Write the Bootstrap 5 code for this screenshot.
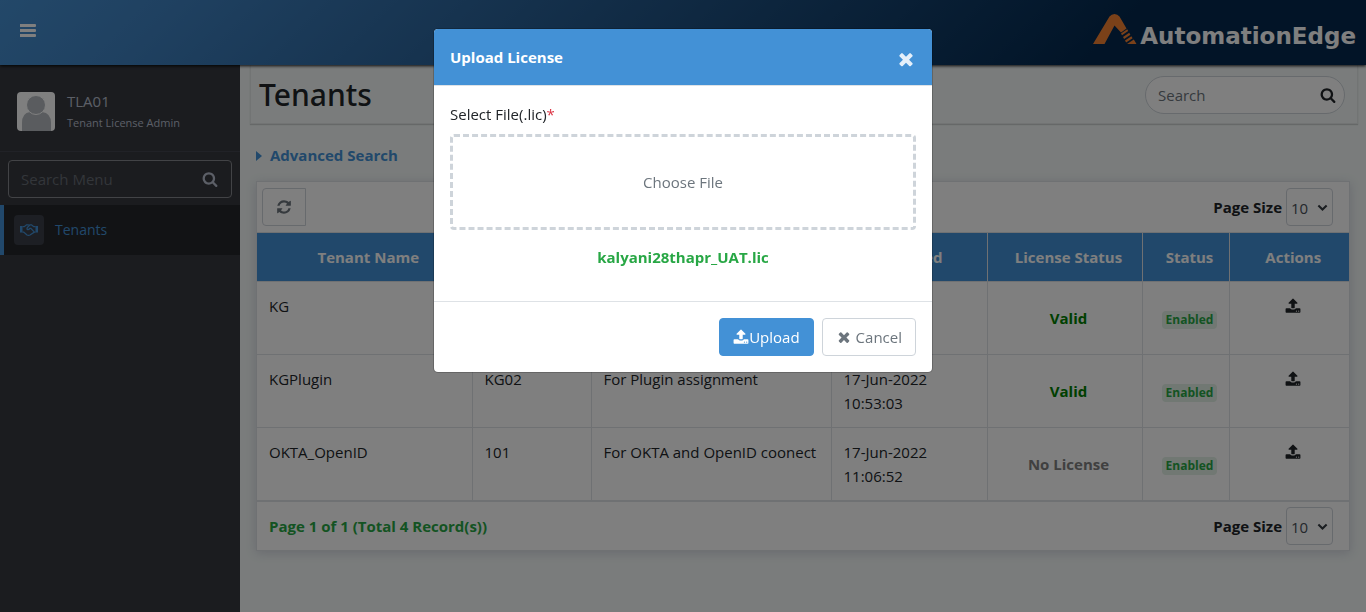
<!DOCTYPE html>
<html lang="en">
<head>
<meta charset="utf-8">
<meta name="viewport" content="width=device-width, initial-scale=1">
<title>Tenants - AutomationEdge</title>
<link href="https://cdn.jsdelivr.net/npm/bootstrap@5.3.0/dist/css/bootstrap.min.css" rel="stylesheet">
<style>
  :root { --ae-blue: #4391d6; --ae-line: #dee2e6; --ae-ink: #212529; }
  body { font-family: "Open Sans", "Noto Sans", sans-serif; font-size: 15px; line-height: 24px; color: var(--ae-ink); background: #f4f9f8; }
  .ico { width: 16px; height: 16px; fill: currentColor; display: inline-block; vertical-align: -2px; flex: none; }
  .form-control, .form-select, .btn { font-size: 15px; line-height: 24px; }

  .topbar { height: 65px; padding: 0 10px 0 16px; background: linear-gradient(135deg, #4690d2 0%, #3f82c2 12%, #04294f 80%, #04294f 100%); box-shadow: 0 1px 3px rgba(0,0,0,.9); z-index: 2; }
  .menu-toggle { color: #fff; }
  .menu-toggle .ico { width: 20px; height: 20px; }
  .brand { color: #fff; font: 700 23px/28px "DejaVu Sans", sans-serif; padding-bottom: 3px; }
  .brand:hover { color: #fff; }
  .brand-mark { width: 44px; height: 32px; margin: 0 3px 5px 0; }

  .side { width: 240px; background: #36383f; color: #b8bfce; }
  .side-user { height: 87px; padding: 6px 17px 0; border-bottom: 1px solid #42454e; }
  .avatar { width: 38px; height: 39px; border-radius: 4px; }
  .side-user small { font-size: 11px; line-height: 20px; }
  .side-search { background: transparent; border: 1px solid #85878c; border-radius: 4px; margin: 8px 8px 7px; padding-right: 9px; }
  .side-search .form-control { background: transparent; color: #b8bfce; }
  .side-search .form-control::placeholder { color: #666c74; }
  .side-link { height: 50px; background: #24272a; border-left: 4px solid var(--ae-blue); color: var(--ae-blue); font-size: 14px; }
  .side-icon { width: 30px; height: 30px; border-radius: 4px; background: #3a3f48; margin: 0 11px 0 10px; }
  .side-icon svg { width: 18px; height: 14px; }

  .page-head { height: 59px; margin: 0 9px 0 10px; padding: 2px 8px 0; border: 1px solid #e4e8e8; border-top: 0; box-shadow: 0 1px 1px rgba(0,0,0,.16); }
  .page-head h1 { font: 500 30px/40px "Noto Sans", "Open Sans", sans-serif; }
  .find { width: 200px; border: 1px solid #ced4da; border-radius: 19px; background: #fff; height: 38px; }
  .find .form-control::placeholder { color: #6c757d; }
  .content-pad { padding: 0 17px 0 16px; }
  .adv { color: var(--ae-blue); font-weight: 700; margin: 19px 0 14px; }
  .adv .ico { width: 6px; height: 10px; vertical-align: 0; }

  .grid-box { box-shadow: 0 2px 10px rgba(70,70,120,.2); background: #fff; border: 1px solid var(--ae-line); }
  .grid-bar { height: 50px; padding: 0 16px 0 5px; }
  .btn-refresh { width: 44px; height: 38px; border: 1px solid #ced4da; color: #6c757d; border-radius: 4px 0 0 4px; }
  .size-pick { width: 47px; height: 38px; padding: 7px 4px 5px; border: 1px solid #ced4da; border-radius: 4px; color: #495057; background-position: right 4px center; background-size: 11px 11px;
    background-image: url("data:image/svg+xml,%3csvg xmlns='http://www.w3.org/2000/svg' viewBox='0 0 16 16'%3e%3cpath fill='none' stroke='%23343a40' stroke-width='3' d='m2 5 6 6 6-6'/%3e%3c/svg%3e"); }
  .tenants { table-layout: fixed; border-color: var(--ae-line); }
  .tenants th, .tenants td { padding: 12px 4px 12px 12px; }
  .tenants thead th { background: var(--ae-blue); color: #fff; text-align: center; white-space: nowrap; border-top: 0; }
  .tenants tbody td { height: 73px; color: var(--ae-ink); }
  .tenants tr > :first-child { border-left: 0; }
  .tenants tr > :last-child { border-right: 0; }
  .c-name { width: 215px; } .c-org { width: 119px; } .c-desc { width: 240px; } .c-date { width: 156px; }
  .c-lic { width: 155px; } .c-stat { width: 87px; } .c-act { width: 120px; }
  .tenants tbody td.valid { color: #008000; }
  .tenants tbody td.nolic { color: #808080; }
  .chip { background: #e2f1e6; color: #28a745; font-size: 12px; line-height: 18px; font-weight: 700; border-radius: 4px; padding: 0 4px; display: inline-block; }
  .grid-foot { height: 49px; border-top: 1px solid var(--ae-line); }
  .total { color: #28a745; font-weight: 700; }

  .modal-content { border-radius: 5px; border-color: rgba(0,0,0,.2); overflow: hidden; }
  .modal-header { background: var(--ae-blue); color: #fff; border-bottom: 1px solid var(--ae-line); border-radius: 0; height: 57px; }
  .modal-title { font-size: 15px; line-height: 24px; font-weight: 700; }
  .close-x { color: #e4effa; }
  .close-x .ico { width: 20px; height: 20px; }
  .drop-area { height: 96px; border: 3px dashed #ced4da; border-radius: 4px; color: #6c757d; cursor: pointer; }
  .picked { margin: 15px 0 8px; }
  .modal-footer .btn { height: 38px; border-radius: 4px; padding: 6px 13px; }
  .btn-up { --bs-btn-bg: var(--ae-blue); --bs-btn-border-color: var(--ae-blue); --bs-btn-color: #fff; --bs-btn-hover-bg: #2f7fc5; --bs-btn-hover-color: #fff; }
  .btn-cancel { --bs-btn-border-color: #ced4da; --bs-btn-color: #6c757d; --bs-btn-bg: #fff; --bs-btn-hover-bg: #f1f3f5; }
</style>
</head>
<body class="d-flex flex-column min-vh-100">

<svg class="d-none" xmlns="http://www.w3.org/2000/svg">
  <symbol id="i-search" viewBox="0 0 1792 1792"><path d="M1216 832q0-185-131.500-316.500t-316.500-131.500-316.500 131.500-131.500 316.500 131.500 316.500 316.500 131.500 316.500-131.500 131.500-316.500zm512 832q0 52-38 90t-90 38q-54 0-90-38l-343-342q-179 124-399 124-143 0-273.500-55.500t-225-150-150-225-55.500-273.500 55.500-273.500 150-225 225-150 273.500-55.500 273.500 55.500 225 150 150 225 55.500 273.500q0 220-124 399l343 343q37 37 37 90z"/></symbol>
  <symbol id="i-refresh" viewBox="0 0 1792 1792"><path d="M1639 1056q0 5-1 7-64 268-268 434.500t-478 166.500q-146 0-282.500-55t-243.500-157l-129 129q-19 19-45 19t-45-19-19-45v-448q0-26 19-45t45-19h448q26 0 45 19t19 45-19 45l-137 137q71 66 161 102t187 36q134 0 250-65t186-179q11-17 53-117 8-23 30-23h192q13 0 22.500 9.500t9.500 22.500zm25-800v448q0 26-19 45t-45 19h-448q-26 0-45-19t-19-45 19-45l138-138q-148-137-349-137-134 0-250 65t-186 179q-11 17-53 117-8 23-30 23h-199q-13 0-22.500-9.500t-9.500-22.500v-7q65-268 270-434.500t480-166.500q146 0 284 55.500t245 156.500l130-129q19-19 45-19t45 19 19 45z"/></symbol>
  <symbol id="i-upload" viewBox="0 0 1792 1792"><path d="M1344 1472q0-26-19-45t-45-19-45 19-19 45 19 45 45 19 45-19 19-45zm256 0q0-26-19-45t-45-19-45 19-19 45 19 45 45 19 45-19 19-45zm128-224v320q0 40-28 68t-68 28h-1472q-40 0-68-28t-28-68v-320q0-40 28-68t68-28h427q21 56 70.500 92t110.500 36h256q61 0 110.500-36t70.500-92h427q40 0 68 28t28 68zm-325-648q-17 40-59 40h-256v448q0 26-19 45t-45 19h-256q-26 0-45-19t-19-45v-448h-256q-42 0-59-40-17-39 14-69l448-448q18-19 45-19t45 19l448 448q31 30 14 69z"/></symbol>
  <symbol id="i-times" viewBox="0 0 1792 1792"><path d="M1490 1322q0 40-28 68l-136 136q-28 28-68 28t-68-28l-294-294-294 294q-28 28-68 28t-68-28l-136-136q-28-28-28-68t28-68l294-294-294-294q-28-28-28-68t28-68l136-136q28-28 68-28t68 28l294 294 294-294q28-28 68-28t68 28l136 136q28 28 28 68t-28 68l-294 294 294 294q28 28 28 68z"/></symbol>
</svg>

<header class="topbar d-flex align-items-center justify-content-between position-relative">
  <button type="button" class="menu-toggle btn p-0 border-0" aria-label="Toggle menu">
    <svg class="ico ms-1 d-block" viewBox="0 0 20 20"><rect x="-1" y="1" width="17" height="3" rx="1"/><rect x="-1" y="6" width="17" height="3" rx="1"/><rect x="-1" y="11" width="17" height="3" rx="1"/></svg>
  </button>
  <a href="#" class="brand d-flex align-items-end text-decoration-none">
    <svg class="brand-mark" viewBox="0 0 44 32" aria-hidden="true">
      <path fill="#f58233" d="M0 31 16.500 3.500Q18.500 1 21.500 1t5 2.500L33.500 15.500 28 19.500 21.500 12.500 11.500 31Z"/>
      <path fill="#f58233" d="m28 20.500 6.200-4.200 1 1.800-6.200 4.200zM30 24l6.200-4.200 1.200 2-6.300 4.300zM32 27.600l6.400-4.300 1.200 2-6.500 4.300zM34 31l6.800-4.500L43.500 31z"/>
    </svg>
    <span>AutomationEdge</span>
  </a>
</header>

<div class="d-flex flex-grow-1">
  <nav class="side flex-shrink-0" aria-label="Main">
    <div class="side-user d-flex align-items-center">
      <svg class="avatar flex-shrink-0" viewBox="0 0 38 39" aria-hidden="true">
        <rect width="38" height="39" fill="#fff"/>
        <path fill="#b4b9be" d="M5 39V31Q5 21 13 20h12Q34 21 34 31V39Z"/>
        <circle cx="19" cy="13" r="9.500" fill="#b4b9be" stroke="#fff"/>
      </svg>
      <div class="ps-2 ms-1">
        <div>TLA01</div>
        <small class="d-block">Tenant License Admin</small>
      </div>
    </div>
    <div class="side-search d-flex align-items-center">
      <input type="search" class="form-control border-0" placeholder="Search Menu" aria-label="Search Menu">
      <svg class="ico me-1"><use href="#i-search"/></svg>
    </div>
    <a href="#" class="side-link d-flex align-items-center text-decoration-none">
      <span class="side-icon d-flex align-items-center justify-content-center">
        <svg viewBox="0 0 18 14" fill="none" stroke="currentColor" stroke-width="1.300" aria-hidden="true"><path fill="currentColor" stroke="none" d="M0 3h2.500v6.500H0zM15.500 3H18v6.500h-2.500z"/><path d="M2.500 3.700h1.800L6.500 1.800h1.700l1 .7M2.500 9.100h1.200L7 12q1.500.8 3 0l4.300-2.900h1.200M15.500 3.700h-1.800L11.500 1.800H10L7.300 4.500q-.8 1.900.6 2.100 1 0 1.900-1.300h1l3.200 3.300"/></svg>
      </span>
      <span>Tenants</span>
    </a>
  </nav>

  <main class="flex-grow-1">
    <div class="page-head d-flex align-items-center justify-content-between">
      <h1 class="mb-0">Tenants</h1>
      <div class="find d-flex align-items-center pe-2 me-1">
        <input type="search" class="form-control border-0 bg-transparent" placeholder="Search" aria-label="Search">
        <svg class="ico"><use href="#i-search"/></svg>
      </div>
    </div>

    <div class="content-pad">
      <a href="#" class="adv d-inline-block text-decoration-none"><svg class="ico me-2" viewBox="0 0 6 10"><path d="M0 0l6 5-6 5z"/></svg>Advanced Search</a>

      <section class="grid-box">
        <div class="grid-bar d-flex align-items-center justify-content-between">
          <button type="button" class="btn btn-refresh p-0" aria-label="Refresh"><svg class="ico"><use href="#i-refresh"/></svg></button>
          <div class="d-flex align-items-center">
            <label class="fw-bold me-1" for="sizeTop">Page Size</label>
            <select id="sizeTop" class="form-select size-pick"><option>10</option><option>25</option></select>
          </div>
        </div>
        <table class="tenants table table-bordered mb-0">
          <colgroup><col class="c-name"><col class="c-org"><col class="c-desc"><col class="c-date"><col class="c-lic"><col class="c-stat"><col class="c-act"></colgroup>
          <thead>
            <tr><th>Tenant Name</th><th></th><th></th><th>Created</th><th>License Status</th><th>Status</th><th>Actions</th></tr>
          </thead>
          <tbody>
            <tr><td>KG</td><td></td><td></td><td></td>
              <td class="align-middle text-center fw-bold valid">Valid</td><td class="align-middle text-center"><span class="chip">Enabled</span></td>
              <td class="text-center"><button type="button" class="btn p-0 border-0 align-top" aria-label="Upload license for KG"><svg class="ico"><use href="#i-upload"/></svg></button></td></tr>
            <tr><td>KGPlugin</td><td>KG02</td><td>For Plugin assignment</td><td>17-Jun-2022 10:53:03</td>
              <td class="align-middle text-center fw-bold valid">Valid</td><td class="align-middle text-center"><span class="chip">Enabled</span></td>
              <td class="text-center"><button type="button" class="btn p-0 border-0 align-top" aria-label="Upload license for KGPlugin"><svg class="ico"><use href="#i-upload"/></svg></button></td></tr>
            <tr><td>OKTA_OpenID</td><td>101</td><td>For OKTA and OpenID coonect</td><td>17-Jun-2022 11:06:52</td>
              <td class="align-middle text-center fw-bold nolic">No License</td><td class="align-middle text-center"><span class="chip">Enabled</span></td>
              <td class="text-center"><button type="button" class="btn p-0 border-0 align-top" aria-label="Upload license for OKTA_OpenID"><svg class="ico"><use href="#i-upload"/></svg></button></td></tr>
          </tbody>
        </table>
        <div class="grid-foot d-flex align-items-center justify-content-between ps-2 pe-3">
          <span class="total ms-1">Page 1 of 1 (Total 4 Record(s))</span>
          <div class="d-flex align-items-center">
            <label class="fw-bold me-1" for="sizeBottom">Page Size</label>
            <select id="sizeBottom" class="form-select size-pick"><option>10</option><option>25</option></select>
          </div>
        </div>
      </section>
    </div>
  </main>
</div>

<div class="modal-backdrop show"></div>
<div class="modal show d-block" tabindex="-1" role="dialog" aria-modal="true" aria-labelledby="upTitle">
  <div class="modal-dialog">
    <form class="modal-content">
      <div class="modal-header">
        <h2 class="modal-title" id="upTitle">Upload License</h2>
        <button type="button" class="close-x btn p-0 border-0 mt-1" aria-label="Close"><svg class="ico d-block"><use href="#i-times"/></svg></button>
      </div>
      <div class="modal-body pb-4">
        <label for="licFile" class="d-block mb-2">Select File(.lic)<span class="text-danger">*</span></label>
        <label for="licFile" class="drop-area d-flex align-items-center justify-content-center">Choose File</label>
        <input type="file" id="licFile" class="visually-hidden" accept=".lic">
        <div class="total picked text-center">kalyani28thapr_UAT.lic</div>
      </div>
      <div class="modal-footer p-3 gap-2">
        <button type="submit" class="btn btn-up m-0"><svg class="ico"><use href="#i-upload"/></svg>Upload</button>
        <button type="button" class="btn btn-cancel m-0"><svg class="ico me-1"><use href="#i-times"/></svg>Cancel</button>
      </div>
    </form>
  </div>
</div>
<script src="https://cdn.jsdelivr.net/npm/bootstrap@5.3.0/dist/js/bootstrap.bundle.min.js"></script>
</body>
</html>
